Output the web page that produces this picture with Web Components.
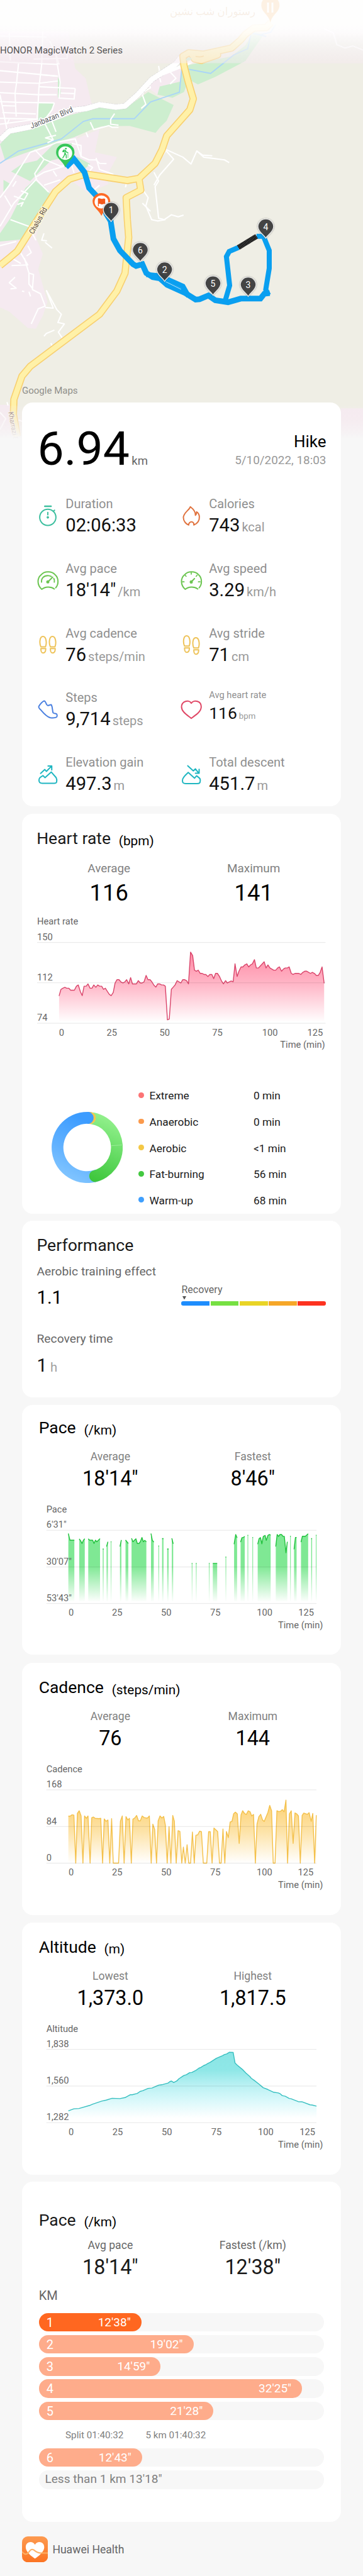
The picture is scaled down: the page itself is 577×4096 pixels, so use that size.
<!DOCTYPE html>
<html lang="en">
<head>
<meta charset="utf-8">
<title>Hike summary</title>
<style>
html,body{margin:0;padding:0}
body{width:577px;height:4096px;overflow:hidden;background:#f7f7f7;font-family:Roboto,"Noto Sans",sans-serif;color:#000}
</style>
</head>
<body>
<hike-report></hike-report>
<script>
const SX = 577 / 1568;
const define = (name, render) => customElements.define(name, class extends HTMLElement {
  connectedCallback() {
    if (this.shadowRoot) return;
    this.attachShadow({ mode: 'open' }).innerHTML = render(this);
  }
});
const attr = (el, n, d = '') => el.getAttribute(n) ?? d;

/* ---------- map ---------- */
const MY = 0.21823;
const marker = (n, x, y) => {
  const cx = x * SX, cy = y * MY;
  return `<g transform="translate(${cx} ${cy})"><path d="M0 17.3C-3.5 11-12.4 7.4-12.4-1.2A12.4 12 0 0 1 12.4-1.2C12.4 7.4 3.5 11 0 17.3Z" fill="#3c3c3c" fill-opacity=".9" stroke="#e8e8e8" stroke-width="1.3" filter="url(#sh)"/><text y="4.4" text-anchor="middle" font-size="14" fill="#fff">${n}</text></g>`;
};
const yellow = [
  '0,1935 40,1880 75,1830 120,1710 200,1500 240,1395 300,1305 370,1268 550,1315 600,1300 670,1190 700,1090 720,990 820,800 835,720 812,590 795,480 790,410 815,385 880,395 1000,350 1040,290 1060,250 1095,205 1150,200 1170,165',
  '600,1300 608,1385 545,1440 550,1600 556,1730 540,1990 505,2120 430,2290 130,2670 95,2740 60,2910 58,3020 75,3180'
];
const white = [
  '0,450 250,470','0,515 250,555','0,598 165,607 250,590','175,545 250,555','170,632 325,645','0,675 165,690 245,690','0,740 70,745 235,750','10,770 65,772','10,820 155,830','0,862 165,868','80,462 72,600 65,680 70,850',
  '185,230 180,470 168,640 165,745 160,870','0,690 30,945','240,385 260,600 255,715 320,722 325,645','235,750 225,800 180,900','215,300 240,385 255,470','0,262 200,270','145,430 290,425 290,380','40,240 45,440','262,678 320,682','0,905 160,868','40,870 30,905',
  '640,590 650,640 620,670 615,690 630,760 610,790','685,480 690,530','690,570 695,600','735,525 760,570 735,612','495,828 478,870 478,905 512,912','390,890 405,945 470,915 485,928 512,928','195,905 230,1020 195,1005','242,985 195,1005','225,885 242,960','205,1040 230,1020','372,965 380,1000',
  '130,1110 200,1070 250,1035 325,1012 350,1140 385,1165 415,1165 430,1190 460,1192','150,1090 190,1160 260,1210 290,1205','190,1160 150,1265 158,1310 210,1400','300,1150 320,1260','310,1045 350,1060 350,1140','415,1150 430,1235 490,1270','380,1200 400,1220 385,1250','155,1290 190,1255 290,1205','190,1350 260,1310','230,1245 245,1285',
  '130,1110 40,1350 0,1440','160,1300 60,1480 0,1650','90,1390 120,1410 105,1455 60,1430','20,1425 50,1510','75,1490 100,1475 90,1505','55,1360 70,1320','430,1350 405,1385',
  '718,1090 790,1145 825,1195 850,1100 880,1145 970,1165 990,1185','850,1100 875,1130 917,1135','718,1100 750,1160 690,1275 665,1350','665,1255 685,1320 670,1360 685,1590 710,1600 740,1565 770,1580 793,1567','620,1390 640,1440 630,1500 655,1600 680,1610 715,1600','615,1480 650,1540','545,1340 542,1365','700,1140 718,1090',
  '1400,210 1440,240 1455,325 1490,350 1525,335 1568,365','45,1600 125,1650 155,1750','0,1790 70,1760','120,1790 135,1840 115,1865','190,1700 180,1750 203,1755','195,1765 225,1808','105,1880 125,1990 145,2000 140,2110 175,2140 195,2230 165,2250 135,2360','200,2115 245,2255 265,2290 250,2350 278,2360 252,2420 268,2460','200,2115 230,2245 195,2240','125,1990 125,2070 140,2100','65,2020 40,2060 70,2100 45,2105','95,2120 105,2125','125,2125 132,2160','235,2405 200,2430 190,2450','90,1845 120,1930 50,1935','30,1860 90,1920','0,3005 25,3050 0,3130','80,3060 96,3070','30,2930 35,2955','220,2500 225,2520'
];
define('trail-map', () => `
<style>
:host{display:block;height:640.1px}
svg{display:block;overflow:visible}
.ns *{vector-effect:non-scaling-stroke}
text{font-family:Roboto,"Noto Sans","DejaVu Sans",sans-serif}
</style>
<svg width="577" height="640.1">
<defs>
<filter id="sh" x="-40%" y="-40%" width="180%" height="180%"><feDropShadow dx="0" dy="0" stdDeviation="1.3" flood-color="#000" flood-opacity=".45"/></filter>
<linearGradient id="top" x1="0" y1="0" x2="0" y2="1"><stop offset="0" stop-color="#fff" stop-opacity=".95"/><stop offset=".4" stop-color="#fff" stop-opacity=".94"/><stop offset=".52" stop-color="#fffdff" stop-opacity=".88"/><stop offset=".7" stop-color="#f9f7f8" stop-opacity=".72"/><stop offset="1" stop-color="#f5eaf0" stop-opacity=".5"/></linearGradient>
<linearGradient id="bot" x1="0" y1="0" x2="0" y2="1"><stop offset="0" stop-color="#f5eef0" stop-opacity=".1"/><stop offset=".4" stop-color="#f6eef1" stop-opacity=".5"/><stop offset="1" stop-color="#f7f7f7"/></linearGradient>
<clipPath id="mc"><rect width="577" height="698"/></clipPath>
</defs>
<g clip-path="url(#mc)">
<rect width="577" height="698" fill="#efeee5"/>
<g class="ns" transform="scale(${SX} ${MY})" fill="none" stroke-linejoin="round">
<g fill="#f5eaf0">
<path d="M0 230H295L325 500 370 570 395 750 430 780 330 1010 430 940 410 1110 505 1145 455 1300 470 1340 380 1405 310 1320 200 1400 190 1500 155 1730 185 1850 165 1960 205 2200 185 2300 155 2395 120 2390 40 2270 0 2240Z"/>
<path d="M640 640L680 540 785 480 780 590 690 640 680 690Z"/>
<path d="M0 2950H60V3200H0Z M1472 2975H1568V3200H1472Z"/>
</g>
<g fill="#cdeecf">
<path d="M0 1050L40 975 130 945 300 840 440 780 540 790 640 670 750 765 720 880 690 930 672 968 560 918 440 920 400 940 320 1000 230 1045 100 1120 22 1170Z"/>
<path d="M690 630L780 595 785 500 810 475 1000 410 1060 330 1095 230 1140 250 1060 445 930 560 855 615 815 580 795 670 745 712 680 690Z"/>
<path d="M165 745L235 750 205 850 165 885Z M235 1045L315 1045 270 1150 220 1170 130 1320 48 1250 95 1195 160 1170Z M330 1140L390 1195 350 1255Z M150 1310L215 1410 180 1540 120 1740 0 1760 0 1700 45 1590 110 1370Z M15 1310L45 1340 15 1400Z M250 560L262 600 262 680 250 715Z"/>
</g>
<g stroke="#a9d5f8" stroke-width="1.8"><polyline points="0,1190 80,1100 210,1040 265,1012 360,885 400,865 580,865 650,743 775,672 785,500"/><polyline points="800,500 910,535 1010,400 1070,355 1085,240 1150,265"/><polyline points="1130,250 1170,235 1190,180"/></g>
<g stroke="#fff" stroke-width="2.1">${white.map(p => `<polyline points="${p}"/>`).join('')}</g>
<polyline points="0,1020 40,955 130,925 300,805 370,792 430,763 500,780 540,773 595,690 655,580 760,465 790,400" stroke="#cfcfd2" stroke-width="9.4" stroke-dasharray="3 1.5"/>
<polyline points="0,1020 40,955 130,925 300,805 370,792 430,763 500,780 540,773 595,690 655,580 760,465 790,400" stroke="#fff" stroke-width="8.4"/>
<polyline points="655,580 700,540 790,480 840,440" stroke="#fff" stroke-width="5"/>
<g stroke="#f8cf6e" stroke-width="11.5">${yellow.map(p => `<polyline points="${p}"/>`).join('')}<path d="M830 400L900 400 940 400 870 440 840 430Z"/></g>
<g stroke="#fff1a8" stroke-width="8.4">${yellow.map(p => `<polyline points="${p}"/>`).join('')}<path d="M830 400L900 400 940 400 870 440 840 430Z" fill="#fff1a8"/></g>
<path d="M803 440C803 420 820 410 830 430L815 440Z" fill="#cdeecf"/>
<path d="M845 410C860 418 872 414 880 408" stroke="#f8cf6e" stroke-width="1.5"/>
</g>
<rect width="577" height="100.5" fill="url(#top)"/>
<g opacity=".13"><path transform="translate(429.8 10)" d="M0 26C-3 12-14.5 10-14.5-2A14.5 14 0 0 1 14.5-2C14.5 10 3 12 0 26Z" fill="#f8a13c"/><path d="M426 4v8M433 4v16M426 12v8" stroke="#fff" stroke-width="3"/></g>
<text x="338" y="23.5" text-anchor="middle" font-size="17" fill="#c98a50" fill-opacity=".14" textLength="136" lengthAdjust="spacingAndGlyphs" direction="rtl">رستوران شب نشین</text>
<text x="0" y="84.5" font-size="15" fill="#555" textLength="195" lengthAdjust="spacingAndGlyphs">HONOR MagicWatch 2 Series</text>
<g fill="#5a5a5e" stroke="#fff" stroke-width="3.5" paint-order="stroke" stroke-linejoin="round">
<text transform="translate(50 204.5) rotate(-22)" font-size="12.5" textLength="72" lengthAdjust="spacingAndGlyphs">Janbazan Blvd</text>
<text transform="translate(53 373) rotate(-61)" font-size="12" textLength="46" lengthAdjust="spacingAndGlyphs" fill="#5b4a3c" stroke="#fdf6d8">Chalus Rd</text>
<text transform="translate(13.5 655.5) rotate(80)" font-size="11" textLength="46" lengthAdjust="spacingAndGlyphs" fill="#7a6050" stroke="#fdf9e6" stroke-width="2">Kharrazi E</text>
</g>
<rect y="645" width="577" height="53" fill="url(#bot)"/>
</g>
<g class="ns" transform="scale(${SX} ${MY})" fill="none" stroke="#0a9ff0" stroke-width="8" stroke-linejoin="miter">
<polyline points="285,1218 320,1160 365,1255 385,1370 440,1470 460,1560 478,1610 490,1740 518,1825 575,1925 588,1938 615,1925 632,1990 660,2020 690,2028 722,2075 800,2135 845,2183 862,2180 900,2153 930,2188 985,2202 1040,2176 1125,2176 1142,2140 1165,2135" stroke-width="9"/>
<polyline points="632,2000 690,2010 790,2085 815,2160"/><path d="M310 1155h22v20h-22Z" fill="#0a9ff0" stroke-width="1"/>
<polyline points="972,2195 992,2080 978,1870 990,1832 1030,1803"/><polyline points="1108,1722 1138,1722 1163,1825 1163,1955 1148,2110 1160,2150"/>
<polyline points="1030,1803 1108,1722" stroke="#4c4c4c"/><polyline points="1030,1803 1108,1722" stroke="#000" stroke-dasharray="1 1.2"/>
<polyline points="715,2052 782,2108" stroke="#dff1fb" stroke-width=".8"/>
</g>
<g transform="translate(${282 * SX} ${1112 * MY})">
<path d="M0 23.5C-4 13-14.6 9-14.6-.5A14.6 13.6 0 0 1 14.6-.5C14.6 9 4 13 0 23.5Z" fill="#37c65a"/><ellipse cy=".8" rx="11" ry="10.8" fill="#fff"/>
<circle cx="1" cy="-6.3" r="1.4" fill="#37c65a"/><path d="M-.8-4.2L-.4.4M-.4.4L1.4 4 1.6 8.6M-.4.4L-1.6 4.4-4 8.4M.4-3.4L1.8-.8 3.8-.2" fill="none" stroke="#37c65a" stroke-width="1.5" stroke-linecap="round"/><path d="M-1.6-5.2C-4.6-4.4-5.2-1.2-4-.6L-1.8-.6Z" fill="#37c65a"/><path d="M4.2-.6V8.4" stroke="#37c65a" stroke-width=".8"/>
</g>
<g transform="translate(${438 * SX} ${1470 * MY})">
<path d="M0 22.5C-4 13-14 9-14-.5A14 13.4 0 0 1 14-.5C14 9 4 13 0 22.5Z" fill="#fd6a25"/><ellipse cy=".3" rx="10.8" ry="10.3" fill="#fff"/>
<path d="M-5.5-5C-3-6.5-.5-4 1.5-4.6 3-5.1 4.5-5 6-4.6V3.6C4 2.6 2.6 4.4.5 4.1-1.5 3.8-2.6 2.8-4.2 3.4V7.2H-5.5Z" fill="#f4581c"/>
</g>
${marker(1, 480, 1535)}${marker(6, 606, 1827)}${marker(2, 711, 1970)}${marker(5, 920, 2071)}${marker(3, 1072, 2080)}${marker(4, 1148, 1656)}
<text x="35" y="625.9" font-size="15" fill="#8f8f8a" textLength="88.6" lengthAdjust="spacingAndGlyphs">Google Maps</text>
</svg>`);

/* ---------- card shell ---------- */
define('report-card', () => `
<style>
:host{display:flex;flex-direction:column;box-sizing:border-box;position:relative;width:506.4px;margin-left:35.3px;background:#fff;border-radius:17px}
</style><slot></slot>`);

/* ---------- metric icons: [cx, cy, vertical scale, colour, markup] ---------- */
const A = 0.21823, B = 0.21141;
const foot = 'M177 262C170 237 171 185 186 185C201 185 203 237 197 262ZM177 276H198C198 300 195 309 187 309C179 309 177 300 177 276Z';
const gauge = 'M235 1348C220 1328 195 1330 181 1350C160 1320 160 1270 178 1245C192 1216 224 1216 239 1245C255 1270 254 1315 241 1339';
const ICONS = {
  timer: [207, 818, A, '#3dbf9f', '<ellipse cx="207" cy="830" rx="35" ry="59"/><path d="M194 749H221" stroke-width="2.4"/><path d="M231 786L236 778M207 794V811"/><ellipse cx="207" cy="830" rx="4" ry="7" fill="#3dbf9f" stroke-width="1"/>'],
  flame: [827, 818, A, '#e0733f', '<path d="M823 753C818 778 793 797 793 832C793 860 806 880 816 886C815 872 822 863 828 863C834 863 840 872 838 886C852 876 863 855 862 825C861 805 855 795 850 790C850 800 848 810 845 815C846 790 836 770 823 753Z"/>'],
  pace: [207, 1286, A, '#6cc551', `<path d="${gauge}M180 1298C178 1270 190 1250 207 1250C213 1250 218 1253 222 1257M233 1272C236 1280 236 1290 235 1298"/><path d="M207 1296L228 1262"/><ellipse cx="207" cy="1296" rx="4" ry="7" fill="#6cc551"/>`],
  speed: [827, 1286, A, '#6cc551', `<path transform="translate(620 0)" d="${gauge}"/><path d="M827 1229V1240M801 1248L805 1256M852 1248L848 1256M789 1296H796M865 1296H858" stroke-width="1.7"/><path d="M827 1296L841 1272"/><ellipse cx="827" cy="1297" rx="4" ry="7" fill="#6cc551"/>`],
  cadence: [207, 246, B, '#eec35a', `<path d="${foot}"/><path transform="translate(41 0)" d="${foot}"/>`],
  stride: [827, 246, B, '#eec35a', `<path transform="translate(621 -5)" d="${foot}"/><path transform="translate(661 9)" d="${foot}"/>`],
  shoe: [207, 734, B, '#4a80e0', '<path d="M190 671C180 680 172 700 168 712C166 722 172 730 178 740C190 765 205 790 218 797C228 799 240 798 245 792C248 785 248 772 244 767C238 764 232 765 230 760C226 740 228 715 222 699C215 698 212 706 206 704C200 700 200 685 196 676C194 671 192 670 190 671Z"/>'],
  heart: [827, 707, B, '#e04866', '<path d="M827 774C810 750 785 725 785 688C785 655 803 640 815 645C822 648 826 656 827 661C829 656 833 648 840 645C855 640 870 655 870 688C870 725 845 750 827 774Z"/>'],
  up: [207, 1219, B, '#1fb6c1', '<path d="M169 1265C169 1248 172 1245 186 1230L195 1245L222 1203L243 1245C246 1255 246 1270 245 1278C243 1288 238 1287 233 1287H183C173 1287 169 1280 169 1265ZM176 1213L194 1184L201 1198L224 1157M208 1157H224V1187"/>'],
  down: [827, 1219, B, '#1fb6c1', '<path d="M789 1268C789 1250 792 1248 800 1230L814 1206L841 1249L850 1231C864 1250 866 1252 866 1265C866 1285 863 1290 852 1290H803C793 1290 789 1285 789 1268ZM812 1156L836 1194L845 1179L860 1212M845 1212H861V1182"/>']
};
define('metric-item', el => {
  const [cx, cy, sy, color, body] = ICONS[attr(el, 'icon')];
  const small = el.hasAttribute('small');
  return `
<style>
:host{display:flex;gap:10.1px;height:102.65px;line-height:1;white-space:nowrap}
svg{flex:none;margin-top:10.6px}
svg *{vector-effect:non-scaling-stroke}
.l{font-size:${small ? 14.7 : 20}px;color:#8f8f8f;margin-top:${small ? -1.4 : 0}px}
.v{display:flex;align-items:baseline;gap:3px;margin-top:${small ? 7.8 : 10}px;font-size:${small ? 26.5 : 29.2}px;color:#111}
.u{font-size:${small ? 13.2 : 20}px;color:#999}
</style>
<svg width="36" height="36"><g transform="translate(18 18) scale(${SX} ${sy}) translate(${-cx} ${-cy})" fill="none" stroke="${color}" stroke-width="2" stroke-linecap="round" stroke-linejoin="round">${body}</g></svg>
<div><div class="l">${attr(el, 'label')}</div><div class="v"><span>${attr(el, 'value')}</span><span class="u">${attr(el, 'unit')}</span></div></div>`;
});

define('summary-head', () => `
<style>
:host{display:flex;justify-content:space-between;align-items:flex-end;padding:35.9px 23.2px 0 24.3px;line-height:1}
.d{display:flex;align-items:baseline;font-size:75px;gap:3.5px}
.d small{font-size:18.6px;color:#666}
.r{text-align:right;padding-bottom:8.9px}
.n{font-size:26px}
.t{font-size:18.9px;color:#999;margin-top:8.2px}
</style>
<div class="d"><span>6.94</span><small>km</small></div>
<div class="r"><div class="n">Hike</div><div class="t">5/10/2022, 18:03</div></div>`);

define('metric-grid', () => `
<style>:host{display:grid;grid-template-columns:227.9px 1fr;margin:40.5px 0 0 22.9px}</style><slot></slot>`);

/* ---------- heading with a pair of figures ---------- */
define('stat-head', el => {
  const big = attr(el, 'size') === 'big', split = attr(el, 'size') === 'split';
  return `
<style>
:host{display:block;line-height:1;white-space:nowrap}
.t{display:flex;align-items:flex-end;gap:12.8px;margin-left:${big ? 22.9 : 26.4}px}
h2{font-weight:400;font-size:26.5px;margin:0 0 .7px;color:${big || split ? '#1a1a1a' : '#000'}}
.t span{font-size:20.8px}
.s{display:grid;grid-template-columns:repeat(2,${big ? 230 : 226.4}px);margin:${big ? 24.7 : split ? 18.7 : 23.6}px 0 0 ${big ? 22.9 : 26.9}px;text-align:center}
.l{font-size:${big ? 18.9 : 17.6}px;color:${split ? '#666' : '#808080'}}
.v{font-size:${big ? 36.3 : 32.3}px;margin-top:${big ? 10.9 : split ? 8.8 : 9.5}px;color:${split ? '#1a1a1a' : '#000'}}
</style>
<div class="t"><h2>${attr(el, 'heading')}</h2><span>${attr(el, 'unit')}</span></div>
<div class="s"><div><div class="l">${attr(el, 'la')}</div><div class="v">${attr(el, 'va').replace(/"/g, '&quot;')}</div></div>
<div><div class="l">${attr(el, 'lb')}</div><div class="v">${attr(el, 'vb').replace(/"/g, '&quot;')}</div></div></div>`;
});

/* ---------- time series ---------- */
const CHARTS = {
  heart: {
    top: 1452, bottom: 1672, y0: 1293.9, sy: .24551, x0: 161, x1: 1407, label: 'Heart rate', lb: 718,
    rows: [['150', 818, 834], ['112', 1079, 1095], ['74', 1341, 1357]],
    ticks: [267, 484, 712, 940, 1167, 1362], tb: 1437, time: 1403, timeb: 1516,
    line: '#d9446a', base: 1345, g: [896, 1350], stops: [['#ff8aa5', 0], ['#ffb5c6', .45], ['#fff', 1]],
    runs: ['256,1180 264,1138 272,1130 281,1124 289,1130 298,1130 306,1143 322,1143 331,1117 339,1109 348,1152 356,1178 364,1117 373,1117 381,1102 390,1130 398,1130 406,1109 415,1124 423,1109 431,1117 440,1117 448,1137 456,1130 465,1152 473,1170 481,1178 490,1158 498,1096 506,1075 515,1075 523,1089 532,1096 540,1089 548,1075 557,1102 565,1061 573,1102 590,1102 598,1081 607,1096 615,1096 623,1089 632,1047 640,1075 649,1075 657,1089 665,1109 674,1123 682,1102 690,1102 699,1109 707,1109 715,1117 724,1335 732,1330 741,1137 749,1123 757,1109 766,1081 782,1096 790,1075 799,1075 807,1081 815,1102 824,896 833,918 841,1013 849,1020 857,1013 866,1034 874,1034 882,1041 890,1041 899,1054 907,1041 916,1041 924,1068 932,1034 940,1034 949,1054 957,1081 966,1102 975,1081 983,1096 991,1089 999,1083 1008,1088 1016,972 1025,1054 1033,1020 1042,992 1050,992 1058,979 1067,972 1075,992 1083,979 1091,972 1100,945 1108,999 1117,999 1142,959 1150,999 1158,979 1167,999 1183,1013 1192,1013 1200,999 1208,992 1217,1020 1225,1006 1233,999 1242,999 1250,992 1259,1034 1267,1041 1275,1034 1292,1034 1300,1041 1309,1027 1317,1020 1326,1020 1342,1034 1350,1027 1359,1034 1367,1047 1376,1047 1384,1027 1392,992 1401,1098']
  },
  pace: {
    top: 2388, bottom: 2631.5, y0: 2218.8, sy: .27278, x0: 201, x1: 1368, label: 'Pace', lb: 682,
    rows: [["6'31\"", 771, 786], ["30'07\"", 986, 1000], ["53'43\"", 1200, 1213]],
    ticks: [308, 507, 719, 931, 1144, 1323], tb: 1285, time: 1394, timeb: 1356,
    line: '#1fc13c', base: 1200, g: [800, 1205], stops: [['#7fe894', 0], ['#7fe894', .48], ['#fff', 1]],
    runs: ['296,805 303,844 322,844', '343,836 349,847 355,863 361,845 367,835', '382,836 388,844 401,844 407,863 413,844 419,853 433,835', '444.5,895 448.5,895', '461,881 467,853', '479,853 482,853', '519,881 525,843', '543,843 555,863', '569,833 575,853 588,836 594,863 601,863 607,853 614,828 620,853 626,845 633,853', '653,805 659,845 665,855', '685,878 688,878', '701,835 707,835', '723,895 729,895', '743,833 749,865', '829,979 832,979', '847,979 850,979', '903,979 906,979', '920,979 939,979', '975,942 978,942', '1012,867 1019,811 1025,830', '1040,855 1046,829 1052,828 1058,822', '1070,815 1073,815', '1091,828 1094,828', '1114,867 1120,835 1126,829 1132,865 1138,822 1146,816 1151,845 1158,816 1164,811 1170,814', '1192,881 1198,811 1204,822 1210,811 1217,811 1223,821 1229,822 1236,917 1242,853', '1254,821 1257,821', '1271,897 1277,828 1282,828', '1301,855 1307,821 1320,821 1332,806', '1345,835 1349,835', '1365,815 1368,815']
  },
  cadence: {
    top: 2800, bottom: 3044.7, y0: 2635.9, sy: .26597, x0: 201, x1: 1368, label: 'Cadence', lb: 683,
    rows: [['168', 775, 790], ['84', 995, 1009], ['0', 1214, 1228]],
    ticks: [308, 507, 719, 931, 1143, 1321], tb: 1303, time: 1394, timeb: 1376,
    line: '#f4c04a', base: 1228, g: [850, 1228], stops: [['#fcd070', 0], ['#fde3a8', .5], ['#fff', 1]],
    runs: ['296,947 304,947 312,939 320,941 328,1228 335,931 343,915 351,945 359,1228 366,946 374,960 381,946 390,1228 397,957 404,952 412,960 428,962 436,960 444,1228 451,964 459,978 467,970 475,1228 483,962 490,1228 513,1228 521,977 529,946 537,1228 545,950 553,970 560,960 568,1228 575,965 583,958 591,943 599,975 607,975 615,946 623,955 631,958 638,958 646,946 654,1228 661,995 669,1027 677,1228 684,975 692,946 700,958 708,949 715,1000 723,1228 731,1010 739,1228 747,943 754,978 762,1228 770,1034 778,1039 786,1228 793,1132 801,1228 809,1118 816,1228 824,1228 832,1042 840,1228 847,1061 855,1059 863,1037 871,1040 879,1228 894,1228 902,1040 909,1040 917,1228 925,1018 941,1039 949,1228 956,1228 964,1024 972,1228 979,1039 987,1075 995,982 1003,978 1010,933 1018,923 1026,934 1034,1110 1042,939 1049,915 1057,931 1065,937 1073,915 1081,921 1088,946 1096,937 1104,1228 1111,995 1119,950 1127,936 1135,970 1142,979 1158,925 1166,883 1174,915 1181,1228 1189,1228 1197,915 1205,920 1213,918 1220,908 1228,921 1236,851 1243,1228 1251,933 1259,915 1267,1110 1275,928 1282,933 1290,946 1298,1228 1306,943 1313,929 1329,936 1336,926 1345,978 1352,931 1360,1228 1367,941']
  },
  altitude: {
    top: 3210, bottom: 3457.6, y0: 3042.2, sy: .26597, x0: 201, x1: 1368, label: 'Altitude', lb: 708,
    rows: [['1,838', 800, 814], ['1,560', 1019, 1033], ['1,282', 1238, 1252]],
    ticks: [308, 509, 722, 936, 1149, 1329], tb: 1327, time: 1394, timeb: 1400,
    line: '#37bfc0', base: 1235, g: [831, 1225], stops: [['#8ae5e5', 0], ['#8fe7e7', .27], ['#b9f1f3', .5], ['#dcf9fb', .75], ['#fff', 1]],
    runs: ['296,1181 320,1169 342,1167 388,1149 400,1142 440,1123 460,1117 485,1106 519,1108 541,1102 563,1085 572,1085 594,1077 606,1065 617,1061 641,1047 657,1045 687,1027 700,1025 727,1015 735,1006 742,1003 751,1012 765,1002 773,990 795,970 806,965 820,953 829,952 845,941 860,926 868,922 880,911 892,904 898,898 909,891 935,867 962,851 970,845 980,841 992,831 1008,832 1016,895 1025,907 1050,936 1063,955 1080,976 1086,986 1098,998 1120,1022 1138,1043 1157,1053 1183,1070 1203,1074 1211,1079 1220,1090 1233,1094 1250,1107 1258,1109 1289,1126 1305,1127 1340,1145 1351,1147 1368,1153']
  }
};
define('trend-chart', el => {
  const c = CHARTS[attr(el, 'series')];
  const X = x => (x * SX).toFixed(2), Y = y => (c.y0 + y * c.sy).toFixed(2);
  const area = c.runs.map(r => { const p = r.split(' '); return `M${p[0].split(',')[0]} ${c.base}L${p.join(' ')}L${p[p.length - 1].split(',')[0]} ${c.base}Z`; }).join('');
  const line = c.runs.map(r => 'M' + r.replace(/ /g, 'L')).join('');
  return `
<style>
:host{display:block;margin-top:auto}
svg{display:block}
text{font-family:Roboto,sans-serif;font-size:14.7px;fill:#666}
.g path{vector-effect:non-scaling-stroke}
</style>
<svg width="506.4" height="${(c.bottom - c.top).toFixed(2)}" viewBox="35.3 ${c.top} 506.4 ${(c.bottom - c.top).toFixed(2)}">
<defs><linearGradient id="f" gradientUnits="userSpaceOnUse" x1="0" x2="0" y1="${c.g[0]}" y2="${c.g[1]}">${c.stops.map(s => `<stop offset="${s[1]}" stop-color="${s[0]}"/>`).join('')}</linearGradient></defs>
<g class="g" transform="translate(0 ${c.y0}) scale(${SX} ${c.sy})"><path d="${area}" fill="url(#f)"/><path d="${line}" fill="none" stroke="${c.line}" stroke-width="1.4" stroke-linejoin="round"/></g>
${c.rows.map(r => `<text x="${X(c.x0)}" y="${Y(r[1])}">${r[0]}</text><line x1="${X(c.x0)}" x2="${X(c.x1)}" y1="${Y(r[2])}" y2="${Y(r[2])}" stroke="#000" stroke-opacity=".1"/>`).join('')}
<text x="${X(c.x0)}" y="${Y(c.lb)}">${c.label}</text>
${c.ticks.map((t, i) => `<text x="${X(t)}" y="${Y(c.tb)}" text-anchor="middle">${i * 25}</text>`).join('')}
<text x="${X(c.time + 2)}" y="${Y(c.timeb)}" text-anchor="end">Time (min)</text>
</svg>`;
});

/* ---------- heart-rate zones ---------- */
define('zone-row', el => `
<style>
:host{display:grid;grid-template-columns:17.6px 165.5px auto;align-items:center;height:41.6px;line-height:41.6px;font-size:17.3px;color:#1a1a1a}
i{width:8.8px;height:8.8px;border-radius:50%;background:${attr(el, 'color')};margin-top:-3.6px}
</style><i></i><span>${attr(el, 'name')}</span><span><slot></slot></span>`);
define('zone-summary', () => `
<style>
:host{display:flex;box-sizing:border-box;height:257.9px;padding:50.4px 0 0 46.8px}
svg{flex:none;margin:46px 24.6px 0 0}
</style>
<svg width="113.2" height="113.2" viewBox="-56.6 -56.6 113.2 113.2">
<defs>
<linearGradient id="b" x1="0" y1="1" x2=".35" y2="0"><stop offset="0" stop-color="#90ceff"/><stop offset=".5" stop-color="#62b2ff"/><stop offset="1" stop-color="#3c9cff"/></linearGradient>
<linearGradient id="g" x1=".2" y1="0" x2="0" y2="1"><stop offset="0" stop-color="#92f08c"/><stop offset=".45" stop-color="#68dd66"/><stop offset="1" stop-color="#3ac438"/></linearGradient>
</defs>
<path d="M7-56.1A56.5 56.5 0 1 0 20 52.8L14 34.9A37.7 37.7 0 1 1 3-37.6Z" fill="url(#b)"/>
<path d="M7-56.1A56.5 56.5 0 0 1 12.9 55C2 54 0 41 8.5 36.8A37.7 37.7 0 0 0 6-37.2C16-41 15-53 7-56.1Z" fill="url(#g)"/>
<path d="M3-56.5L7-56.1C16-53 16-41 6-37.2L3-37.6Z" fill="#f3c54b"/>
<path d="M0-56.5L3-56.5C12.5-53 12.5-41 3-37.6L0-37.7Z" fill="#3c9cff"/>
<path d="M38-2.9L55.5-4" stroke="#b7f2b4" stroke-width=".6"/>
</svg>
<div><slot></slot></div>`);

/* ---------- performance ---------- */
define('performance-panel', () => `
<style>
:host{display:block;padding:26.6px 0 0 23.2px;line-height:1;white-space:nowrap}
h2{margin:0;font-weight:400;font-size:26.6px;color:#1a1a1a}
.s{font-size:19.25px;color:#666}
.row{display:flex;align-items:flex-end;margin-top:12.6px}
.n{font-size:29.2px;width:230px}
.r{width:229.6px;padding-bottom:2.4px}
.k{font-size:16px;color:#666}
.tri{display:block;margin:1.1px 0 3px 1.8px}
.bar{display:grid;grid-template-columns:repeat(5,1fr);gap:1.4px;height:6.4px;border-radius:3.2px;overflow:hidden}
.h{display:flex;align-items:baseline;gap:5px;font-size:29.2px;margin-top:18.7px;color:#111}
.h small{font-size:20.3px;color:#a0a0a0}
</style>
<h2>Performance</h2>
<div class="s" style="margin-top:17.5px">Aerobic training effect</div>
<div class="row"><div class="n">1.1</div><div class="r"><div class="k">Recovery</div>
<svg class="tri" width="6" height="5.8"><path d="M0 0H6L3 5.8Z" fill="#555"/></svg>
<div class="bar"><b style="background:#1e8dfd"></b><b style="background:#76e042"></b><b style="background:#e9d426"></b><b style="background:#f6a728"></b><b style="background:#fd3220"></b></div></div></div>
<div class="s" style="margin-top:41.2px">Recovery time</div>
<div class="h"><span>1</span><small>h</small></div>`);

/* ---------- kilometre splits ---------- */
define('split-bar', el => `
<style>
:host{display:block;height:29.4px;line-height:30.4px;border-radius:14.7px;background:#f7f7f7;color:#fff}
div{display:flex;justify-content:space-between;box-sizing:border-box;width:${attr(el, 'w')}px;height:100%;padding:0 17px 0 12px;border-radius:14.7px;background:${el.hasAttribute('best') ? '#ff6720' : '#feac8b'};font-size:19px}
b{font-weight:400;font-size:20px}
</style><div><b>${attr(el, 'n')}</b><span><slot></slot></span></div>`);
define('split-list', () => `
<style>
:host{display:flex;flex-direction:column;gap:5.9px;margin:0 26.9px 0 26.5px}
.k{font-size:20px;line-height:1;color:#666;margin:19px 0 11.6px}
.m{display:flex;gap:35.2px;height:33.2px;line-height:36px;padding-left:42.3px;font-size:15.2px;color:#808080}
.less{height:29.4px;line-height:28.6px;border-radius:14.7px;background:#f7f7f7;color:#808080;font-size:19.1px;padding-left:9.6px}
</style>
<div class="k">KM</div>
<split-bar n="1" w="163" best>12'38"</split-bar>
<split-bar n="2" w="245.8">19'02"</split-bar>
<split-bar n="3" w="193.6">14'59"</split-bar>
<split-bar n="4" w="418.4">32'25"</split-bar>
<split-bar n="5" w="277.5">21'28"</split-bar>
<div class="m"><span>Split 01:40:32</span><span>5 km 01:40:32</span></div>
<split-bar n="6" w="164.1">12'43"</split-bar>
<div class="less">Less than 1 km 13'18"</div>`);

define('brand-footer', () => `
<style>
:host{display:flex;align-items:center;gap:6.9px;margin:22.3px 0 0 35.3px;height:41.3px;font-size:17.6px;color:#666}
span{padding-top:1px}
</style>
<svg width="41.2" height="41.3" viewBox="0 0 112 112">
<defs><linearGradient id="o" x1="0" y1="0" x2="0" y2="1"><stop offset="0" stop-color="#fd9a50"/><stop offset="1" stop-color="#fb7423"/></linearGradient></defs>
<rect width="112" height="112" rx="25" fill="url(#o)"/>
<path d="M56 96C44 88 16 68 16 46C16 24 44 16 56 36C68 16 96 24 96 46C96 68 68 88 56 96Z" fill="#fff"/>
<path d="M0 66C10 78 18 80 26 72C34 62 40 52 50 58C60 66 68 72 80 72H112" fill="none" stroke="#fdb266" stroke-width="5.5"/>
</svg><span>Huawei Health</span>`);

define('hike-report', () => `
<style>:host{display:block}report-card+report-card{margin-top:var(--gap)}</style>
<trail-map></trail-map>
<report-card style="height:642.1px">
<summary-head></summary-head>
<metric-grid>
<metric-item icon="timer" label="Duration" value="02:06:33"></metric-item>
<metric-item icon="flame" label="Calories" value="743" unit="kcal"></metric-item>
<metric-item icon="pace" label="Avg pace" value="18'14&quot;" unit="/km"></metric-item>
<metric-item icon="speed" label="Avg speed" value="3.29" unit="km/h"></metric-item>
<metric-item icon="cadence" label="Avg cadence" value="76" unit="steps/min"></metric-item>
<metric-item icon="stride" label="Avg stride" value="71" unit="cm"></metric-item>
<metric-item icon="shoe" label="Steps" value="9,714" unit="steps"></metric-item>
<metric-item icon="heart" small label="Avg heart rate" value="116" unit="bpm"></metric-item>
<metric-item icon="up" label="Elevation gain" value="497.3" unit="m"></metric-item>
<metric-item icon="down" label="Total descent" value="451.7" unit="m"></metric-item>
</metric-grid>
</report-card>
<report-card style="--gap:11.4px;height:636.3px;padding-top:26.9px">
<stat-head size="big" heading="Heart rate" unit="(bpm)" la="Average" va="116" lb="Maximum" vb="141"></stat-head>
<trend-chart series="heart"></trend-chart>
<zone-summary>
<zone-row color="#fc7475" name="Extreme">0 min</zone-row>
<zone-row color="#fb9a4c" name="Anaerobic">0 min</zone-row>
<zone-row color="#f4c845" name="Aerobic">&lt;1 min</zone-row>
<zone-row color="#43c840" name="Fat-burning">56 min</zone-row>
<zone-row color="#3f9ffd" name="Warm-up">68 min</zone-row>
</zone-summary>
</report-card>
<report-card style="--gap:11px;height:281.1px"><performance-panel></performance-panel></report-card>
<report-card style="--gap:11.8px;height:397.7px;padding-top:23.5px">
<stat-head heading="Pace" unit="(/km)" la="Average" va="18'14&quot;" lb="Fastest" vb="8'46&quot;"></stat-head>
<trend-chart series="pace"></trend-chart>
</report-card>
<report-card style="--gap:12.4px;height:400.8px;padding-top:26.4px">
<stat-head heading="Cadence" unit="(steps/min)" la="Average" va="76" lb="Maximum" vb="144"></stat-head>
<trend-chart series="cadence"></trend-chart>
</report-card>
<report-card style="--gap:11.9px;height:401px;padding-top:26.3px">
<stat-head heading="Altitude" unit="(m)" la="Lowest" va="1,373.0" lb="Highest" vb="1,817.5"></stat-head>
<trend-chart series="altitude"></trend-chart>
</report-card>
<report-card style="--gap:11.5px;height:541.4px;padding-top:47.5px">
<stat-head size="split" heading="Pace" unit="(/km)" la="Avg pace" va="18'14&quot;" lb="Fastest (/km)" vb="12'38&quot;"></stat-head>
<split-list></split-list>
</report-card>
<brand-footer></brand-footer>`);
</script>
</body>
</html>
